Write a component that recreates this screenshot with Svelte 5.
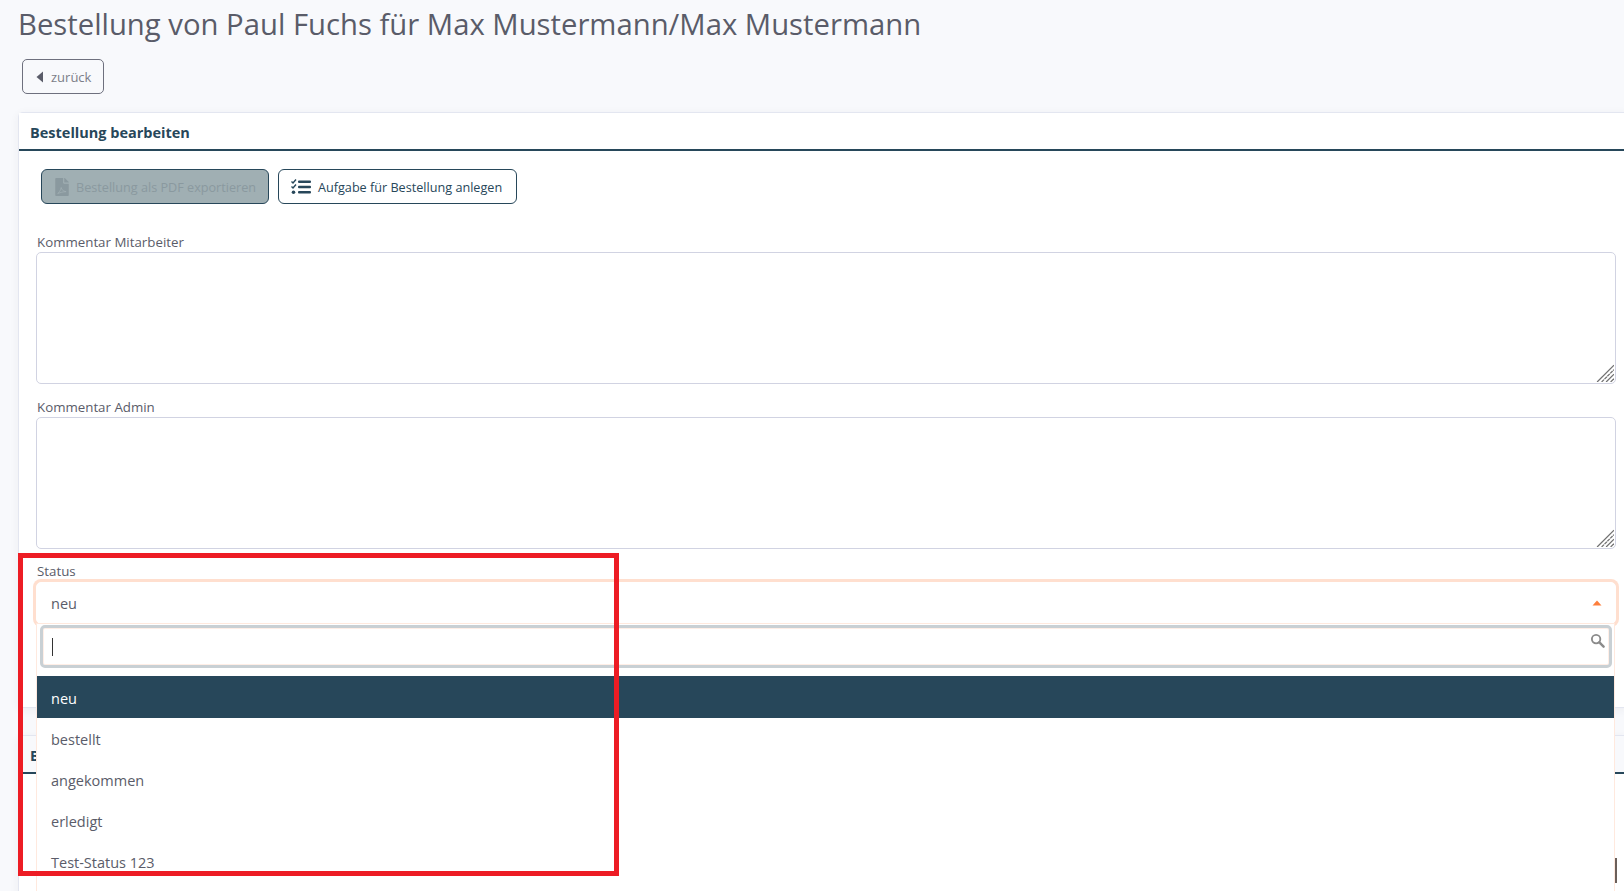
<script>
  const options = ['neu', 'bestellt', 'angekommen', 'erledigt', 'Test-Status 123'];
</script>

{#snippet grip()}
  <svg class="grip" viewBox="0 0 16 16" width="18" height="18" stroke="#707070" stroke-width="1.100" fill="none">
    <path d="M1 16L16 1" />
    <path d="M5 16L16 5" stroke-dasharray="3 0.600" />
    <path d="M9 16L16 9" />
    <path d="M13 16L16 13" />
  </svg>
{/snippet}

<div class="page">
  <h1>Bestellung von Paul Fuchs für Max Mustermann/Max Mustermann</h1>
  <button class="back">
    <svg viewBox="0 0 8 12" width="8" height="12"><path d="M7 0.500V11.500L0.500 6Z" fill="#5a5c69"/></svg>
    zurück
  </button>

  <section class="card first">
    <header>Bestellung bearbeiten</header>
    <div class="body">
      <div class="actions">
        <button class="btn disabled">
          <svg viewBox="0 0 384 512" width="14" height="18"><path fill="#8a999f" d="M224 136V0H24C10.700 0 0 10.700 0 24v464c0 13.300 10.700 24 24 24h336c13.300 0 24-10.700 24-24V160H248c-13.200 0-24-10.800-24-24zm160-14.100v6.100H256V0h6.100c6.400 0 12.500 2.500 17 7l97.900 98c4.500 4.500 7 10.600 7 16.900z"/><path fill="none" stroke="#a0afb3" stroke-width="22" d="M70 440c50-30 80-90 100-170c10 60 40 100 140 120c-90 0-150 20-240 50z"/></svg>
          Bestellung als PDF exportieren
        </button>
        <button class="btn task">
          <svg viewBox="0 0 20 16" width="20" height="16" fill="#27475a"><rect x="7" y="1.500" width="13" height="2.500" rx="1"/><rect x="7" y="6.800" width="13" height="2.500" rx="1"/><rect x="7" y="12" width="13" height="2.500" rx="1"/><path d="M0.500 2.500l1.500 1.500 3-3.500" fill="none" stroke="#27475a" stroke-width="1.400"/><path d="M0.500 7.500l1.500 1.500 3-3.500" fill="none" stroke="#27475a" stroke-width="1.400"/><circle cx="2.500" cy="13.300" r="1.800"/></svg>
          Aufgabe für Bestellung anlegen
        </button>
      </div>

      <label for="k1">Kommentar Mitarbeiter</label>
      <div class="area"><textarea id="k1"></textarea>{@render grip()}</div>
      <label for="k2">Kommentar Admin</label>
      <div class="area"><textarea id="k2"></textarea>{@render grip()}</div>

      <div class="status">Status</div>
      <div class="select-wrap">
        <div class="select">
          <span>neu</span>
          <svg class="caret" viewBox="0 0 10 6" width="10" height="6"><path d="M5 0.500L9.500 5.500H0.500Z" fill="#fd7e3c"/></svg>
        </div>
        <div class="dropdown">
          <div class="search">
            <span class="cursor"></span>
            <svg viewBox="0 0 16 16" width="15" height="15"><circle cx="6.500" cy="6.500" r="4.500" fill="none" stroke="#8b8b8b" stroke-width="2"/><path d="M10 10l4.500 4.500" stroke="#8b8b8b" stroke-width="2.600" stroke-linecap="round"/></svg>
          </div>
          <ul>
            {#each options as o, i}
              <li class:active={i === 0}>{o}</li>
            {/each}
          </ul>
        </div>
      </div>
    </div>
  </section>

  <section class="card second">
    <header>Bestellung</header>
    <div class="edge"></div>
  </section>

  <div class="mark"></div>
</div>

<style>
  :global(body) {
    margin: 0;
    background: #f8f9fc;
    overflow: hidden;
  }
  .page {
    position: relative;
    height: 891px;
    overflow: hidden;
    padding: 0 0 0 18px;
    font-family: "Open Sans", "Noto Sans", sans-serif;
    color: #5a5c69;
    box-sizing: border-box;
  }
  h1 {
    margin: 0;
    padding-top: 5px;
    font-size: 29.270px;
    font-weight: 400;
    line-height: 38px;
    height: 54px;
    white-space: nowrap;
  }
  .back {
    display: flex;
    align-items: center;
    gap: 7px;
    margin-left: 4px;
    width: 82px;
    height: 35px;
    box-sizing: border-box;
    padding: 0 0 0 13px;
    background: transparent;
    border: 1px solid #6e707e;
    border-radius: 5px;
    font: 400 13px "Open Sans", sans-serif;
    color: #7b7d88;
  }
  .card {
    background: #fff;
    border: 1px solid #e3e6f0;
    border-right: 0;
    border-radius: 5px 0 0 5px;
    box-shadow: 0 2px 10px rgba(58, 59, 69, 0.06);
    margin-right: -4px;
  }
  .first { margin-top: 18px; height: 594px; }
  .second { margin-top: 27px; height: 200px; }
  header {
    height: 36px;
    line-height: 39px;
    box-sizing: content-box;
    padding-left: 11px;
    border-bottom: 2px solid #27475a;
    background: #f8f9fc;
    font-size: 14.500px;
    font-weight: 700;
    color: #27475a;
    white-space: nowrap;
  }
  .first header { background: #fff; }
  .edge {
    width: 2px;
    height: 25px;
    margin: 84px 0 0 1596px;
    background: #6b5f5a;
  }
  .body { padding: 18px 8px 0 17px; width: 1580px; box-sizing: border-box; }
  .actions { display: flex; gap: 9px; margin: 0 0 29px 5px; }
  .btn {
    display: flex;
    align-items: center;
    gap: 7px;
    height: 35px;
    box-sizing: border-box;
    padding: 1px 14px 0 13px;
    background: #fff;
    border: 1px solid #27475a;
    border-radius: 6px;
    font: 400 12.650px "Open Sans", sans-serif;
    color: #27475a;
    white-space: nowrap;
  }
  .btn svg { flex: none; margin-top: -1px; }
  .btn.task { padding-left: 12px; }
  .btn.disabled {
    background: #a0afb3;
    color: #8a999f;
    width: 228px;
    padding-right: 0;
  }
  label, .status {
    display: block;
    padding-left: 1px;
    font-size: 13.300px;
    line-height: 18px;
    color: #5a5c69;
  }
  .area { position: relative; width: 1580px; margin: 1px 0 14px; }
  textarea {
    display: block;
    width: 1580px;
    height: 132px;
    box-sizing: border-box;
    border: 1px solid #d1d3e2;
    border-radius: 5px;
    background: #fff;
    outline: none;
    resize: none;
  }
  .grip { position: absolute; right: 2px; bottom: 2px; }
  .status { margin-top: -1px; }
  .select-wrap { position: relative; width: 1580px; margin-top: 2px; }
  .select {
    display: flex;
    align-items: center;
    justify-content: space-between;
    height: 42px;
    box-sizing: border-box;
    padding: 0 14px;
    background: #fff;
    border-radius: 5px;
    border: 1px solid #fff;
    box-shadow: 0 0 0 3px #ffdfcf;
    font-size: 14.500px;
    color: #5a5c69;
  }
  .caret { margin-right: -1px; }
  .dropdown {
    position: absolute;
    top: 42px;
    left: 1px;
    width: 1577px;
    height: 300px;
    background: #fff;
    box-shadow: 0 0 0 1px #ffe9de;
  }
  .search {
    position: relative;
    margin: 1px 2px 8px 3px;
    height: 43px;
    box-sizing: border-box;
    background: #fff;
    border: 3px solid #c9d0d4;
    border-radius: 5px;
    box-shadow: inset 0 0 0 1px #ffeee6;
  }
  .search svg { position: absolute; right: 4px; top: 5px; }
  .cursor {
    position: absolute;
    left: 9px;
    top: 10px;
    width: 1px;
    height: 18px;
    background: #333;
  }
  ul { margin: 0; padding: 0; list-style: none; }
  li {
    height: 41px;
    line-height: 44px;
    padding-left: 14px;
    font-size: 14.500px;
    color: #5a5c69;
  }
  li.active { height: 42px; background: #27475a; color: #fff; line-height: 45px; }
  .mark {
    position: absolute;
    left: 18px;
    top: 553px;
    width: 601px;
    height: 323px;
    box-sizing: border-box;
    border: 5px solid #ed1c24;
    pointer-events: none;
  }
</style>
